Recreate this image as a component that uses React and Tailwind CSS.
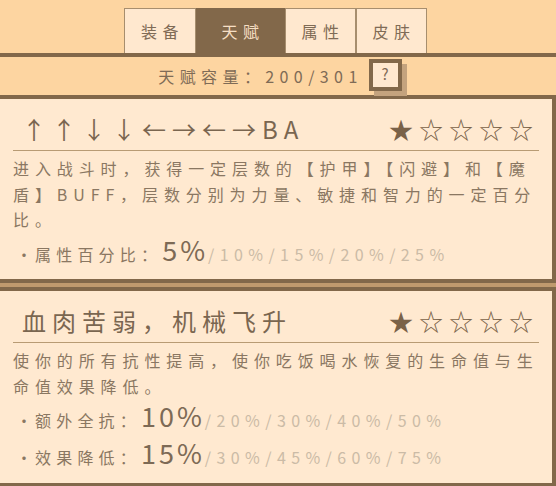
import React from "react";

const font = { fontFamily: '"Noto Sans CJK SC", "Noto Sans", sans-serif' };

function Tab({ label, active, w }) {
  return (
    <div
      className={
        "flex items-center justify-center h-[45px] text-[16px] tracking-[5.4px] " +
        w +
        (active
          ? " bg-[#82684a] text-[#f6dfc4]"
          : " bg-[#ffe8cf] text-[#7f6b56] border-t border-l border-r border-[#a78e6e]")
      }
    >
      <span className="pl-[5px]">{label}</span>
    </div>
  );
}

function Stars() {
  return (
    <div className="text-[24px] tracking-[6px] leading-[36px] text-[#7a6248]">
      ★☆☆☆☆
    </div>
  );
}

function StatLine({ label, value, rest }) {
  return (
    <div className="flex items-baseline h-[37px] whitespace-nowrap">
      <span className="w-[22px] pl-[3px] text-[16px] text-[#8a7762]">·</span>
      <span className="text-[16px] tracking-[5.2px] text-[#8a7762]">{label}</span>
      <span className="text-[27px] tracking-[3px] text-[#7d6a55] leading-[37px]">{value}</span>
      <span className="text-[16px] tracking-[5.4px] text-[#cbbba6]">{rest}</span>
    </div>
  );
}

function Card({ title, lines, stats, extra }) {
  return (
    <div className={"bg-[#ffe9d0] border-r-4 border-[#82684a] px-[13px] " + extra}>
      <div className="flex items-center justify-between pt-[12px] pb-[3px] border-b border-[#b89b74]">
        <div className="pl-[9px] text-[24px] tracking-[6px] leading-[36px] text-[#7a6650] whitespace-nowrap">
          {title}
        </div>
        <Stars />
      </div>
      <div className="mt-[5px] text-[16px] tracking-[5.9px] leading-[25.5px] text-[#8a7762]">
        {lines.map((l, i) => (
          <div key={i} className="whitespace-nowrap">
            {l}
          </div>
        ))}
      </div>
      <div className="-mt-[2px]">
        {stats.map((s, i) => (
          <StatLine key={i} {...s} />
        ))}
      </div>
    </div>
  );
}

export default function App() {
  return (
    <div className="w-[556px] h-[486px] overflow-hidden bg-[#fdd5a1]" style={font}>
      <div className="flex pl-[124px] pt-[8px]">
        <Tab label="装备" w="w-[72px]" />
        <Tab label="天赋" active w="w-[89px]" />
        <Tab label="属性" w="w-[71px]" />
        <Tab label="皮肤" w="w-[71px]" />
      </div>
      <div className="h-[46px] border-t-4 border-b-4 border-[#82684a] bg-[#fdd5a1] flex items-center justify-center pl-[4px] gap-[6px]">
        <span className="text-[16px] tracking-[5.4px] text-[#7f6b56]">天赋容量：200/301</span>
        <div className="relative w-[33px] h-[32px] -mt-[3px]">
          <div className="absolute left-[5px] top-[5px] w-[33px] h-[32px] bg-[#c4a37e]" />
          <div className="absolute inset-0 border-4 border-[#82684a] bg-[#ffe8cf] flex items-center justify-center text-[15px] text-[#7f6b56]">
            ?
          </div>
        </div>
      </div>
      <Card
        extra="h-[184px] border-b-4"
        title="↑↑↓↓←→←→BA"
        lines={[
          "进入战斗时，获得一定层数的【护甲】【闪避】和【魔",
          "盾】BUFF，层数分别为力量、敏捷和智力的一定百分",
          "比。",
        ]}
        stats={[{ label: "属性百分比：", value: "5%", rest: "/10%/15%/20%/25%" }]}
      />
      <div className="h-[4px] bg-[#c09a6e]" />
      <Card
        extra="border-t-4 border-b-4 h-[200px]"
        title="血肉苦弱，机械飞升"
        lines={["使你的所有抗性提高，使你吃饭喝水恢复的生命值与生", "命值效果降低。"]}
        stats={[
          { label: "额外全抗：", value: "10%", rest: "/20%/30%/40%/50%" },
          { label: "效果降低：", value: "15%", rest: "/30%/45%/60%/75%" },
        ]}
      />
    </div>
  );
}
